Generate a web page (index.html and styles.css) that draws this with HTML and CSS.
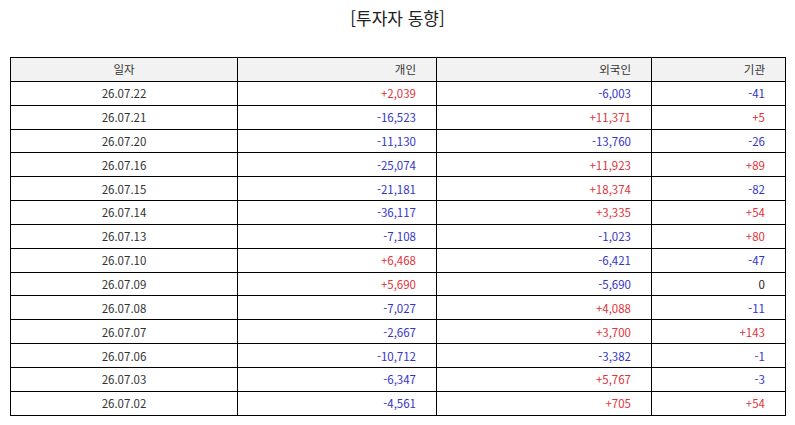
FILE: index.html
```html
<!DOCTYPE html>
<html lang="ko">
<head>
<meta charset="utf-8">
<link rel="stylesheet" href="styles.css">
</head>
<body>
<div class="wrap">
  <h1 class="title">[투자자 동향]</h1>
  <table class="grid">
    <colgroup>
      <col class="c1"><col class="c2"><col class="c3"><col class="c4">
    </colgroup>
    <thead>
      <tr><th class="date">일자</th><th>개인</th><th>외국인</th><th>기관</th></tr>
    </thead>
    <tbody>
      <tr><td class="date">26.07.22</td><td class="up">+2,039</td><td class="dn">-6,003</td><td class="dn">-41</td></tr>
      <tr><td class="date">26.07.21</td><td class="dn">-16,523</td><td class="up">+11,371</td><td class="up">+5</td></tr>
      <tr><td class="date">26.07.20</td><td class="dn">-11,130</td><td class="dn">-13,760</td><td class="dn">-26</td></tr>
      <tr><td class="date">26.07.16</td><td class="dn">-25,074</td><td class="up">+11,923</td><td class="up">+89</td></tr>
      <tr><td class="date">26.07.15</td><td class="dn">-21,181</td><td class="up">+18,374</td><td class="dn">-82</td></tr>
      <tr><td class="date">26.07.14</td><td class="dn">-36,117</td><td class="up">+3,335</td><td class="up">+54</td></tr>
      <tr><td class="date">26.07.13</td><td class="dn">-7,108</td><td class="dn">-1,023</td><td class="up">+80</td></tr>
      <tr><td class="date">26.07.10</td><td class="up">+6,468</td><td class="dn">-6,421</td><td class="dn">-47</td></tr>
      <tr><td class="date">26.07.09</td><td class="up">+5,690</td><td class="dn">-5,690</td><td class="zero">0</td></tr>
      <tr><td class="date">26.07.08</td><td class="dn">-7,027</td><td class="up">+4,088</td><td class="dn">-11</td></tr>
      <tr><td class="date">26.07.07</td><td class="dn">-2,667</td><td class="up">+3,700</td><td class="up">+143</td></tr>
      <tr><td class="date">26.07.06</td><td class="dn">-10,712</td><td class="dn">-3,382</td><td class="dn">-1</td></tr>
      <tr><td class="date">26.07.03</td><td class="dn">-6,347</td><td class="up">+5,767</td><td class="dn">-3</td></tr>
      <tr><td class="date">26.07.02</td><td class="dn">-4,561</td><td class="up">+705</td><td class="up">+54</td></tr>
    </tbody>
  </table>
</div>
</body>
</html>
```

FILE: styles.css
```css
html, body {
  margin: 0;
  padding: 0;
  background: #ffffff;
}
body {
  font-family: "Noto Sans CJK KR", "Noto Sans", sans-serif;
  color: #333333;
}
.wrap {
  padding: 5px 10px 0 10px;
}
.title {
  margin: 0;
  height: 52px;
  font-size: 17px;
  font-weight: normal;
  line-height: 26px;
  text-align: center;
  color: #222222;
}
.grid {
  width: 775px;
  border-collapse: collapse;
  table-layout: fixed;
  font-size: 11.5px;
}
.c1 { width: 227px; }
.c2 { width: 199px; }
.c3 { width: 215px; }
.c4 { width: 134px; }
.grid th,
.grid td {
  border: 1px solid #000000;
  height: 22.85px;
  padding: 0 20px 0 4px;
  text-align: right;
  line-height: 22px;
  font-weight: normal;
  white-space: nowrap;
}
.grid th {
  background: #f2f2f2;
  color: #333333;
}
.grid .date {
  text-align: center;
  padding: 0;
}
.up { color: #e0333a; }
.dn { color: #3434c8; }
.zero { color: #222222; }
```
